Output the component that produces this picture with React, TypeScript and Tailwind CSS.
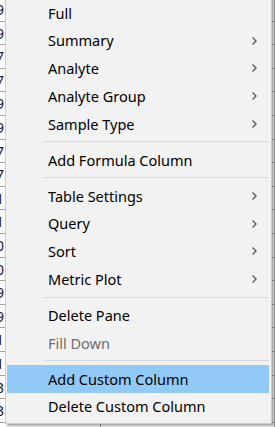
import React from "react";

type Item =
  | { type: "item"; label: string; sub?: boolean; disabled?: boolean; active?: boolean }
  | { type: "sep" };

const items: Item[] = [
  { type: "item", label: "Full" },
  { type: "item", label: "Summary", sub: true },
  { type: "item", label: "Analyte", sub: true },
  { type: "item", label: "Analyte Group", sub: true },
  { type: "item", label: "Sample Type", sub: true },
  { type: "sep" },
  { type: "item", label: "Add Formula Column" },
  { type: "sep" },
  { type: "item", label: "Table Settings", sub: true },
  { type: "item", label: "Query", sub: true },
  { type: "item", label: "Sort", sub: true },
  { type: "item", label: "Metric Plot", sub: true },
  { type: "sep" },
  { type: "item", label: "Delete Pane" },
  { type: "item", label: "Fill Down", disabled: true },
  { type: "sep" },
  { type: "item", label: "Add Custom Column", active: true },
  { type: "item", label: "Delete Custom Column" },
];

const digits = ["9", "9", "7", "7", "9", "9", "7", "7", "1", "1", "0", "0", "9", "9", "1", "1", "3", "3", "3"];

function Chevron() {
  return (
    <svg width="7" height="10" viewBox="0 0 7 10" className="block">
      <path d="M1.5 1.5 L5 5 L1.5 8.5" fill="none" stroke="#5a5a5a" strokeWidth="1.4" />
    </svg>
  );
}

export default function App() {
  return (
    <div
      className="relative w-[275px] h-[427px] overflow-hidden bg-white"
      style={{ fontFamily: '"Noto Sans", "Open Sans", sans-serif' }}
    >
      {/* background spreadsheet */}
      <div className="flex flex-col -mt-[2px]">
        {digits.map((d, i) => (
          <div key={i} className="flex h-[23.6px] border-b border-[#a0a0a0]">
            <div className="w-[5px] overflow-hidden flex justify-end items-center">
              <span className="text-[14.5px] leading-none text-[#14143c] pr-[1px]">{d}</span>
            </div>
            <div className="w-[96px] border-r border-[#a0a0a0]" />
            <div className="flex-1 border-r border-[#a0a0a0]" />
          </div>
        ))}
      </div>

      {/* context menu */}
      <div className="absolute left-[5px] top-[-4px] w-[267px] bg-[#f2f2f2] border border-[#cccccc] pl-[1px] pr-[2px] py-[2px] shadow-[2px_2px_2px_rgba(0,0,0,0.35)]">
        {items.map((it, i) =>
          it.type === "sep" ? (
            <div key={i} className="h-[8.25px] flex items-center pl-[36px]">
              <div className="h-px w-full bg-[#d7d7d7]" />
            </div>
          ) : (
            <div
              key={i}
              className={
                "h-[27.75px] flex items-center pl-[41px] pr-[11px] text-[14.5px] " +
                (it.active ? "bg-[#91c9f7] " : "") +
                (it.disabled ? "text-[#6d6d6d]" : "text-black")
              }
            >
              <span className="flex-1 leading-none">{it.label}</span>
              {it.sub && <Chevron />}
            </div>
          )
        )}
      </div>
    </div>
  );
}
